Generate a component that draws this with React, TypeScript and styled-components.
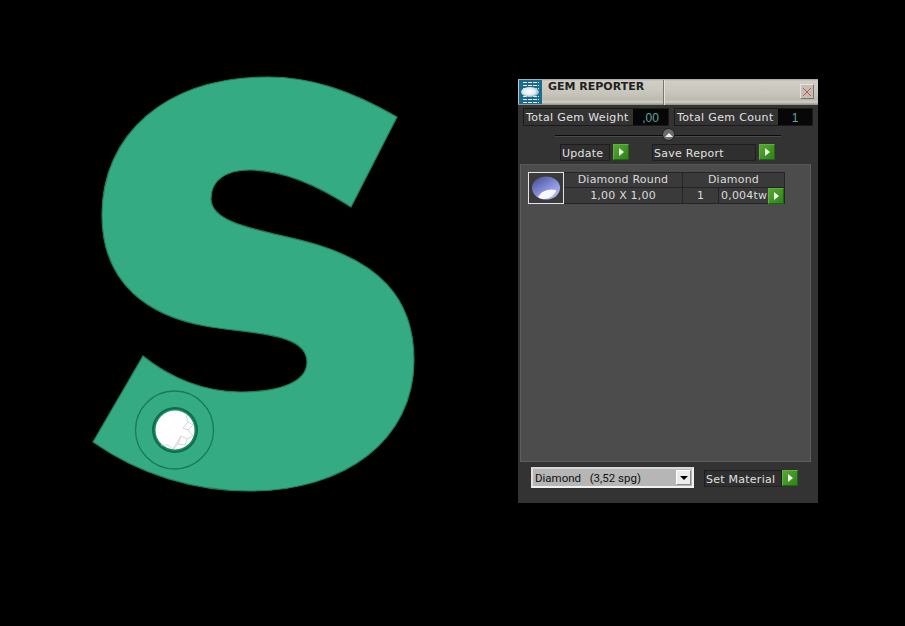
import React from "react";
import styled, { createGlobalStyle } from "styled-components";

const Global = createGlobalStyle`
  html, body { margin: 0; padding: 0; background: #000; }
  #root { width: 905px; height: 626px; overflow: hidden; }
`;
const Page = styled.div`
  width: 905px; height: 626px; background: #000; display: flex; align-items: flex-start;
  font-family: "DejaVu Sans", sans-serif; color: #d8d8d8;
`;
const Viewport = styled.div`
  width: 518px; height: 626px; flex: none;
  svg { display: block; }
`;
const Panel = styled.div`
  margin-top: 79px; width: 300px; height: 424px; background: #333333; display: flex; flex-direction: column;
`;
const TitleBar = styled.div`
  height: 26px; flex: none; display: flex; align-items: flex-start; padding-top: 1px; box-sizing: border-box;
  background: linear-gradient(#a3a29c 0, #d0cec5 2px, #c8c6bc 14px, #bcbab0 21px, #d2d0c8 23px, #8b8a85 26px);
`;
const Logo = styled.div`
  width: 23px; height: 24px; margin-left: 1px; flex: none; background: #1b6b8e;
  svg { display: block; }
`;
const Title = styled.div`
  height: 25px; padding: 1px 0 0 6px; flex: none; box-sizing: border-box; width: 122px;
  font: bold 11px/11px "DejaVu Sans", sans-serif; color: #222;
  border-right: 1px solid #77766f; box-shadow: 1px 0 0 #e4e2da;
`;
const Spacer = styled.div` flex: 1; `;
const CloseButton = styled.div`
  width: 14px; height: 15px; margin: 4px 4px 0 0; background: #c8bdb2; border: 1px solid; box-sizing: border-box;
  border-color: #e6e4dc #77756f #77756f #e6e4dc; display: flex; align-items: center; justify-content: center;
  svg { display: block; }
`;
const StatsRow = styled.div`
  display: flex; padding: 3px 5px 0 5px; height: 18px; flex: none; gap: 5px;
`;
const Stat = styled.div<{ $w: number }>`
  width: ${p => p.$w}px; display: flex; border: 1px solid #1a1a1a; box-sizing: border-box; height: 18px;
`;
const StatLabel = styled.div`
  flex: 1; font-size: 11px; letter-spacing: 0.35px; line-height: 18px; padding-left: 2px; color: #e2e2e2; white-space: nowrap; overflow: hidden;
`;
const StatValue = styled.div<{ $w: number }>`
  width: ${p => p.$w}px; background: #070707; color: #62a6aa; font: 12px/18px "Liberation Sans", sans-serif; text-align: center;
`;
const SliderRow = styled.div`
  position: relative; height: 14px; flex: none; margin-top: 2px; padding: 0 37px; display: flex; align-items: center; justify-content: center;
`;
const SliderLine = styled.div` height: 1px; background: #0c0c0c; flex: 1; box-shadow: 0 1px 0 #4a4a4a; `;
const SliderKnob = styled.div`
  position: absolute; left: 144px; top: 0; width: 13px; height: 13px; border-radius: 50%;
  background: #6b6b6b; border: 1px solid #1d1d1d; box-sizing: border-box; display: flex; align-items: center; justify-content: center;
  &::after { content: ""; border-left: 4px solid transparent; border-right: 4px solid transparent; border-bottom: 4px solid #eee; }
`;
const ButtonsRow = styled.div`
  display: flex; height: 17px; flex: none; margin-top: 2px; padding-left: 42px;
`;
const ActionGroup = styled.div<{ $w: number; $mr?: number }>`
  width: ${p => p.$w}px; margin-right: ${p => p.$mr ?? 0}px; display: flex; justify-content: space-between; flex: none;
`;
const ActionLabel = styled.div<{ $w: number }>`
  width: ${p => p.$w}px; height: 17px; box-sizing: border-box; padding-left: 1px; border: 1px solid #1d1d1d; border-bottom-color: #222;
  font-size: 11px; letter-spacing: 0.25px; line-height: 17px; color: #e0e0e0; white-space: nowrap; background: #2f2f2f;
`;
const Go = styled.div`
  width: 16px; height: 16px; flex: none; box-sizing: border-box; background: linear-gradient(135deg, #55a832, #2c8418);
  border: 1px solid; border-color: #62b040 #1f6512 #1f6512 #62b040; display: flex; align-items: center; justify-content: center;
  &::after { content: ""; border-top: 4px solid transparent; border-bottom: 4px solid transparent; border-left: 5px solid #f2f8ea; margin-left: 1px; }
`;
const ListArea = styled.div`
  width: 291px; height: 298px; margin: 3px 0 0 2px; flex: none; background: #4c4c4c; border: 1px solid #5e5e5e; border-top-color: #565656;
  box-sizing: border-box; padding: 7px 0 0 7px;
`;
const GemRow = styled.div` display: flex; position: relative; width: 257px; `;
const Thumb = styled.div`
  width: 36px; height: 32px; flex: none; box-sizing: border-box; border: 1px solid #e4e4e4; background: #3a3a3a;
  display: flex; align-items: center; justify-content: center;
  svg { display: block; }
`;
const GemTable = styled.div`
  flex: 1; display: grid; grid-template-columns: 119px 36px 65px; grid-template-rows: 15px 15px;
  height: 32px; background: #3a3a3a; border: 1px solid #242424; border-left: 0; box-sizing: border-box;
`;
const Cell = styled.div<{ $span?: number; $align?: string; $last?: boolean }>`
  grid-column: span ${p => p.$span ?? 1}; font-size: 11px; letter-spacing: 0.2px; line-height: 15px; text-align: ${p => p.$align ?? "center"};
  color: #dcdcdc; white-space: nowrap; box-sizing: border-box; overflow: hidden; padding: 0 0 0 ${p => p.$align === "left" ? 2 : 0}px;
  border-right: ${p => p.$last ? 0 : 1}px solid #242424;
`;
const HeadCell = styled(Cell)` border-bottom: 1px solid #242424; line-height: 14px; `;
const GoOverlay = styled.div` position: absolute; left: 240px; top: 16px; `;
const BottomRow = styled.div` display: flex; align-items: flex-start; margin-top: 5px; padding-left: 13px; flex: none; `;
const Select = styled.div`
  width: 163px; height: 21px; box-sizing: border-box; border: 2px solid #f0f0f0; border-top-color: #d8d8d8; border-left-color: #e0e0e0; background: #b6b6b6;
  display: flex; align-items: center; justify-content: space-between; font: 11.5px/16px Roboto, sans-serif; color: #111; margin-right: 10px; padding-left: 2px;
  white-space: pre;
`;
const SelectArrow = styled.div`
  width: 15px; height: 15px; margin-right: 1px; background: #ececec; border: 1px solid; border-color: #fff #888 #888 #fff; box-sizing: border-box;
  display: flex; align-items: center; justify-content: center;
  &::after { content: ""; border-left: 4px solid transparent; border-right: 4px solid transparent; border-top: 4px solid #000; }
`;
const SetRow = styled.div` display: flex; margin-top: 3px; `;

const GEM_S = "M397 117 C350 90 310 77 268 77 C165 77 102 135 102 215 C102 285 150 316 205 326 C250 334 307 332 307 362 C307 382 280 392 240 392 C205 392 170 378 143 356 L93 442 C140 475 195 491 250 491 C345 491 414 440 414 360 C414 295 375 262 315 244 C270 231 211 226 211 199 C211 180 226 170 250 170 C285 170 320 187 351 207 Z";

const App: React.FC = () => (
  <Page>
    <Global />
    <Viewport>
      <svg width="518" height="626" viewBox="0 0 518 626">
        <path d={GEM_S} fill="#35ab83" stroke="#1f7f5f" strokeWidth="1.2" />
        <circle cx="174.500" cy="430" r="39" fill="none" stroke="#177a5c" strokeWidth="1.3" />
        <circle cx="175" cy="430" r="23" fill="#0e6b4e" />
        <circle cx="175" cy="430" r="21" fill="#1c8a68" />
        <circle cx="175" cy="430" r="19.500" fill="#fff" />
        <g fill="none" stroke="#d0d0d0" strokeWidth="0.9">
          <path d="M186 415 L188 422 L193 425 L188 430 L193 436 L187 439 L185 445 L178 444 L173 449 L168 445 L161 445" />
          <path d="M188 422 L183 428 L188 430 M187 439 L181 436 L178 444 M181 436 L173 449" />
        </g>
      </svg>
    </Viewport>
    <Panel>
      <TitleBar>
        <Logo>
          <svg width="23" height="24" viewBox="0 0 23 24">
            <defs>
              <radialGradient id="logoGem" cx="0.45" cy="0.45" r="0.6">
                <stop offset="0" stopColor="#ffffff" />
                <stop offset="0.6" stopColor="#dfe9ec" />
                <stop offset="1" stopColor="#6fa3b8" />
              </radialGradient>
            </defs>
            <g stroke="#e6f0f4" strokeWidth="1" strokeDasharray="4 1">
              <path d="M4 2.500H20M4 5.500H20M4 8.500H20M4 16.500H20M4 19.500H20M4 22.500H20" />
            </g>
            <ellipse cx="11" cy="12" rx="9" ry="5" fill="url(#logoGem)" />
          </svg>
        </Logo>
        <Title>GEM REPORTER</Title>
        <Spacer />
        <CloseButton>
          <svg width="10" height="10" viewBox="0 0 10 10">
            <path d="M1 1L9 9M9 1L1 9" stroke="#b85a5a" strokeWidth="1" />
          </svg>
        </CloseButton>
      </TitleBar>
      <StatsRow>
        <Stat $w={146}>
          <StatLabel>Total Gem Weight</StatLabel>
          <StatValue $w={35}>,00</StatValue>
        </Stat>
        <Stat $w={139}>
          <StatLabel>Total Gem Count</StatLabel>
          <StatValue $w={34}>1</StatValue>
        </Stat>
      </StatsRow>
      <SliderRow>
        <SliderLine />
        <SliderKnob />
      </SliderRow>
      <ButtonsRow>
        <ActionGroup $w={69} $mr={23}>
          <ActionLabel $w={50}>Update</ActionLabel>
          <Go />
        </ActionGroup>
        <ActionGroup $w={123}>
          <ActionLabel $w={104}>Save Report</ActionLabel>
          <Go />
        </ActionGroup>
      </ButtonsRow>
      <ListArea>
        <GemRow>
          <Thumb>
            <svg width="32" height="28" viewBox="0 0 32 28">
              <defs>
                <linearGradient id="gemfill" x1="0" y1="0" x2="0.8" y2="1">
                  <stop offset="0" stopColor="#3d4a88" />
                  <stop offset="0.6" stopColor="#8a92e0" />
                  <stop offset="1" stopColor="#b4bcf0" />
                </linearGradient>
              </defs>
              <ellipse cx="16" cy="14" rx="14" ry="11.500" fill="url(#gemfill)" />
              <path d="M8 23 C11 17 19 14 26 16 C26 20 20 25 14 25 C11 25 9 24 8 23 Z" fill="#f8f8f8" />
            </svg>
          </Thumb>
          <GemTable>
            <HeadCell>Diamond Round</HeadCell>
            <HeadCell $span={2} $last>Diamond</HeadCell>
            <Cell>1,00 X 1,00</Cell>
            <Cell>1</Cell>
            <Cell $align="left" $last>0,004tw</Cell>
          </GemTable>
          <GoOverlay><Go /></GoOverlay>
        </GemRow>
      </ListArea>
      <BottomRow>
        <Select>
          <span>Diamond   (3,52 spg)</span>
          <SelectArrow />
        </Select>
        <SetRow>
          <ActionLabel $w={78}>Set Material</ActionLabel>
          <Go />
        </SetRow>
      </BottomRow>
    </Panel>
  </Page>
);

export default App;
